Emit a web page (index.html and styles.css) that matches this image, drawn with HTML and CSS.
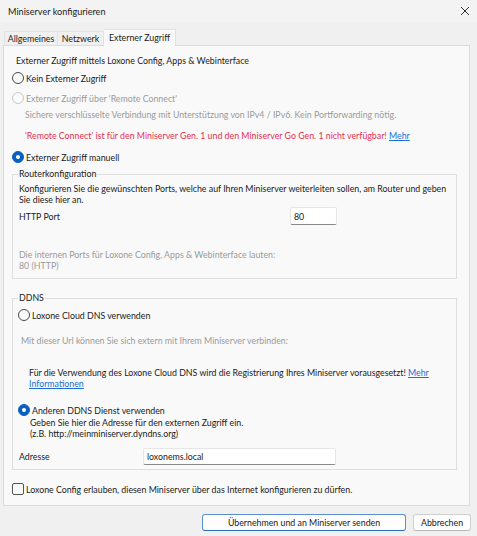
FILE: index.html
```html
<!DOCTYPE html>
<html lang="de">
<head>
<meta charset="utf-8">
<title>Miniserver konfigurieren</title>
<link rel="stylesheet" href="styles.css">
</head>
<body>
<div class="window">
  <div class="titlebar">
    <span class="title">Miniserver konfigurieren</span>
    <svg class="close" width="10" height="10" viewBox="0 0 10 10"><path d="M1 1L9 9M9 1L1 9" stroke="#303030" stroke-width="1"/></svg>
  </div>
  <div class="tabstrip">
    <div class="tab">Allgemeines</div>
    <div class="tab">Netzwerk</div>
    <div class="tab active">Externer Zugriff</div>
  </div>
  <div class="panel">
    <div class="row intro">Externer Zugriff mittels Loxone Config, Apps &amp; Webinterface</div>
    <div class="row opt-kein"><span class="radio"></span>Kein Externer Zugriff</div>
    <div class="row opt-remote disabled"><span class="radio"></span>Externer Zugriff über 'Remote Connect'</div>
    <div class="row sub grey">Sichere verschlüsselte Verbindung mit Unterstützung von IPv4 / IPv6. Kein Portforwarding nötig.</div>
    <div class="row sub red">'Remote Connect' ist für den Miniserver Gen. 1 und den Miniserver Go Gen. 1 nicht verfügbar!&nbsp;<a class="link">Mehr</a></div>
    <div class="row opt-manuell"><span class="radio checked"></span>Externer Zugriff manuell</div>

    <fieldset class="group router">
      <legend>Routerkonfiguration</legend>
      <p class="multi">Konfigurieren Sie die gewünschten Ports, welche auf Ihren Miniserver weiterleiten sollen, am Router und geben<br>Sie diese hier an.</p>
      <div class="field port-field"><span class="flabel">HTTP Port</span><span class="input port">80</span></div>
      <p class="multi grey ports-info">Die internen Ports für Loxone Config, Apps &amp; Webinterface lauten:<br>80 (HTTP)</p>
    </fieldset>

    <fieldset class="group ddns">
      <legend>DDNS</legend>
      <div class="row opt-cloud"><span class="radio"></span>Loxone Cloud DNS verwenden</div>
      <div class="row url-info grey">Mit dieser Url können Sie sich extern mit Ihrem Miniserver verbinden:</div>
      <p class="multi cloud-info">Für die Verwendung des Loxone Cloud DNS wird die Registrierung Ihres Miniserver vorausgesetzt! <a class="link">Mehr<br>Informationen</a></p>
      <div class="row opt-other"><span class="radio checked"></span>Anderen DDNS Dienst verwenden</div>
      <p class="multi other-info">Geben Sie hier die Adresse für den externen Zugriff ein.<br>(z.B. http://meinminiserver.dyndns.org)</p>
      <div class="field addr-field"><span class="flabel">Adresse</span><span class="input addr">loxonems.local</span></div>
    </fieldset>

    <div class="row opt-check"><span class="checkbox"></span>Loxone Config erlauben, diesen Miniserver über das Internet konfigurieren zu dürfen.</div>
  </div>
  <div class="buttons">
    <button class="btn default">Übernehmen und an Miniserver senden</button>
    <button class="btn cancel">Abbrechen</button>
  </div>
</div>
</body>
</html>
```

FILE: styles.css
```css
html, body {
  margin: 0;
  padding: 0;
  background: #f0f0f0;
}
body {
  font-family: "Lato", "Liberation Sans", sans-serif;
  font-size: 8.8px;
  color: #1a1a1a;
}
.window {
  width: 477px;
  height: 536px;
  background: #f0f0f0;
  display: flex;
  flex-direction: column;
}
.titlebar {
  height: 22px;
  background: #f3f3f3;
  display: flex;
  align-items: center;
  justify-content: space-between;
  padding: 0 8px;
  box-sizing: border-box;
}
.title {
  font-size: 9.1px;
  padding-top: 1px;
}
.close {
  margin-right: -1px;
}
.tabstrip {
  height: 23px;
  display: flex;
  align-items: flex-end;
  padding-left: 4px;
  box-sizing: border-box;
}
.tab {
  height: 14px;
  border: 1px solid #e2e2e2;
  border-bottom: none;
  background: #f0f0f0;
  display: flex;
  align-items: center;
  justify-content: center;
  white-space: nowrap;
  box-sizing: border-box;
}
.tab:nth-child(1) { width: 54px; }
.tab:nth-child(2) { width: 46px; border-left: none; }
.tab.active {
  width: 72px;
  height: 17px;
  background: #f9f9f9;
  border-left: none;
  margin-bottom: -1px;
  position: relative;
  z-index: 1;
  align-items: flex-start;
  padding-top: 2px;
}
.panel {
  margin: 0 7px 0 3px;
  height: 461px;
  box-sizing: border-box;
  border: 1px solid #dcdcdc;
  background: #f9f9f9;
  padding: 7px 12px 0 8px;
}
.row {
  height: 14px;
  display: flex;
  align-items: center;
  white-space: nowrap;
}
.intro { margin-left: 4px; }
.opt-kein { margin-top: 4px; }
.opt-remote { margin-top: 6px; }
.sub { margin-left: 13px; }
.sub.grey { margin-top: 2px; }
.sub.red { margin-top: 7px; }
.opt-manuell { margin-top: 8px; }
.grey { color: #9a9a9a; }
.red { color: #e5304f; }
.disabled { color: #9a9a9a; }
.link {
  color: #1a6fd6;
  text-decoration: underline;
}
.radio {
  width: 10px;
  height: 10px;
  border: 1px solid #4a4a4a;
  border-radius: 50%;
  margin-right: 2px;
  flex: none;
  box-sizing: content-box;
  background: #fbfbfb;
}
.disabled .radio { border-color: #c8c8c8; }
.radio.checked {
  background: #0a5fc0;
  border-color: #0a5fc0;
  position: relative;
}
.radio.checked::after {
  content: "";
  position: absolute;
  left: 3px;
  top: 3px;
  width: 4px;
  height: 4px;
  border-radius: 50%;
  background: #ffffff;
}
.checkbox {
  width: 10px;
  height: 10px;
  border: 1px solid #555;
  border-radius: 2px;
  margin-right: 2px;
  flex: none;
  box-sizing: content-box;
  background: #fbfbfb;
}
.group {
  margin: 0;
  border: 1px solid #dedede;
  padding: 0 6px 0 6px;
  min-width: 0;
}
.group legend {
  padding: 0 1px;
  margin-left: -1px;
  line-height: 12px;
  height: 12px;
}
.router {
  margin-top: 4px;
  padding-top: 3px;
  padding-bottom: 7px;
}
.multi {
  margin: 0;
  line-height: 11px;
  white-space: nowrap;
}
.field {
  display: flex;
  align-items: center;
}
.port-field {
  margin-top: 2px;
  height: 18px;
}
.flabel {
  width: 271px;
}
.input {
  background: #ffffff;
  border: 1px solid #e6e6e6;
  border-bottom-color: #8a8a8a;
  border-radius: 2px;
  box-sizing: border-box;
  display: flex;
  align-items: center;
  padding-left: 3px;
  color: #1a1a1a;
}
.port {
  width: 47px;
  height: 18px;
}
.ports-info { margin-top: 24px; }
.ddns {
  margin-top: 13px;
  padding-top: 4px;
  padding-bottom: 4px;
}
.opt-cloud { margin-left: -1px; }
.url-info { margin-top: 11px; margin-left: 2px; }
.cloud-info { margin-top: 20px; margin-left: 10px; }
.opt-other { margin-top: 14px; margin-left: -1px; }
.other-info { margin-left: 11px; }
.addr-field {
  margin-top: 9px;
  height: 17px;
}
.addr-field .flabel { width: 124px; }
.addr {
  width: 193px;
  height: 17px;
}
.opt-check { margin-top: 12px; }
.buttons {
  display: flex;
  justify-content: flex-end;
  gap: 7px;
  padding-right: 6px;
  margin-top: 8px;
}
.btn {
  font-family: inherit;
  font-size: 8.8px;
  color: #1a1a1a;
  height: 17px;
  padding: 0;
  background: #fdfdfd;
  border: 1px solid #d0d0d0;
  border-bottom-color: #b8b8b8;
  border-radius: 3px;
}
.btn.default {
  width: 204px;
  border-color: #5b8fcf;
  border-bottom-color: #2f6fbf;
}
.btn.cancel { width: 58px; }
```
